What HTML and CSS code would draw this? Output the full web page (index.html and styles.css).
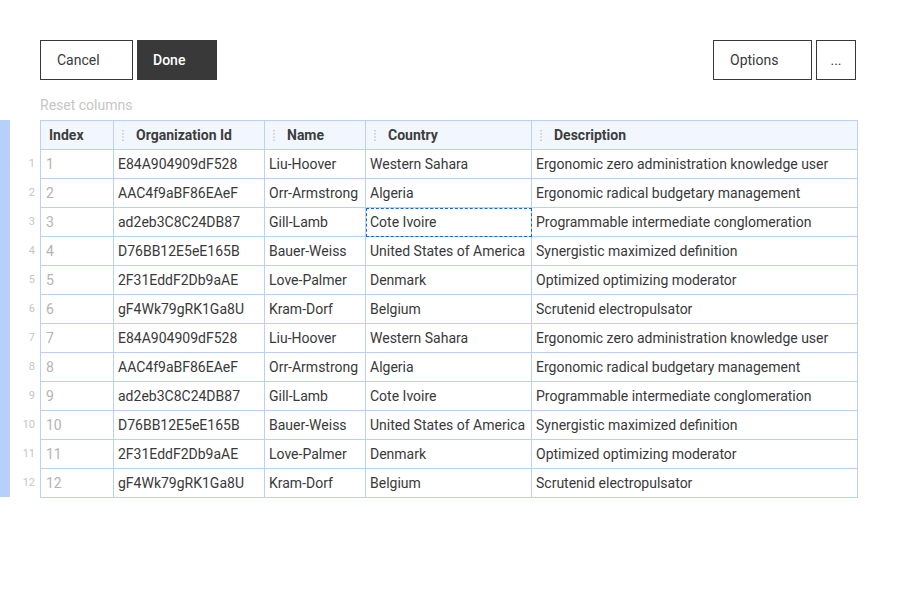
FILE: index.html
```html
<!DOCTYPE html>
<html lang="en">
<head>
<meta charset="utf-8">
<title>Data grid</title>
<link rel="stylesheet" href="styles.css">
</head>
<body>
<div class="page">
  <div class="toolbar">
    <div class="btn-group">
      <button class="btn btn-secondary btn-cancel">Cancel</button>
      <button class="btn btn-primary btn-done">Done</button>
    </div>
    <div class="btn-group">
      <button class="btn btn-secondary btn-options">Options</button>
      <button class="btn btn-secondary btn-more">...</button>
    </div>
  </div>
  <div class="reset">Reset columns</div>
  <div class="grid-area">
    <div class="sel-bar"></div>
    <div class="gutter">
      <div class="gutter-head"></div>
      <div class="gnum">1</div><div class="gnum">2</div><div class="gnum">3</div><div class="gnum">4</div>
      <div class="gnum">5</div><div class="gnum">6</div><div class="gnum">7</div><div class="gnum">8</div>
      <div class="gnum">9</div><div class="gnum">10</div><div class="gnum">11</div><div class="gnum">12</div>
    </div>
    <table class="grid">
      <colgroup>
        <col class="c-index"><col class="c-org"><col class="c-name"><col class="c-country"><col class="c-desc">
      </colgroup>
      <thead>
        <tr>
          <th class="th-index">Index</th>
          <th><span class="th-inner"><svg class="drag" width="2" height="11" viewBox="0 0 2 11"><rect x="0.5" y="0" width="1" height="1.4"/><rect x="0.5" y="3.2" width="1" height="1.4"/><rect x="0.5" y="6.4" width="1" height="1.4"/><rect x="0.5" y="9.6" width="1" height="1.4"/></svg>Organization Id</span></th>
          <th><span class="th-inner"><svg class="drag" width="2" height="11" viewBox="0 0 2 11"><rect x="0.5" y="0" width="1" height="1.4"/><rect x="0.5" y="3.2" width="1" height="1.4"/><rect x="0.5" y="6.4" width="1" height="1.4"/><rect x="0.5" y="9.6" width="1" height="1.4"/></svg>Name</span></th>
          <th><span class="th-inner"><svg class="drag" width="2" height="11" viewBox="0 0 2 11"><rect x="0.5" y="0" width="1" height="1.4"/><rect x="0.5" y="3.2" width="1" height="1.4"/><rect x="0.5" y="6.4" width="1" height="1.4"/><rect x="0.5" y="9.6" width="1" height="1.4"/></svg>Country</span></th>
          <th><span class="th-inner"><svg class="drag" width="2" height="11" viewBox="0 0 2 11"><rect x="0.5" y="0" width="1" height="1.4"/><rect x="0.5" y="3.2" width="1" height="1.4"/><rect x="0.5" y="6.4" width="1" height="1.4"/><rect x="0.5" y="9.6" width="1" height="1.4"/></svg>Description</span></th>
        </tr>
      </thead>
      <tbody>
        <tr><td class="idx">1</td><td>E84A904909dF528</td><td>Liu-Hoover</td><td>Western Sahara</td><td>Ergonomic zero administration knowledge user</td></tr>
        <tr><td class="idx">2</td><td>AAC4f9aBF86EAeF</td><td>Orr-Armstrong</td><td>Algeria</td><td>Ergonomic radical budgetary management</td></tr>
        <tr><td class="idx">3</td><td>ad2eb3C8C24DB87</td><td>Gill-Lamb</td><td class="focused">Cote Ivoire</td><td>Programmable intermediate conglomeration</td></tr>
        <tr><td class="idx">4</td><td>D76BB12E5eE165B</td><td>Bauer-Weiss</td><td>United States of America</td><td>Synergistic maximized definition</td></tr>
        <tr><td class="idx">5</td><td>2F31EddF2Db9aAE</td><td>Love-Palmer</td><td>Denmark</td><td>Optimized optimizing moderator</td></tr>
        <tr><td class="idx">6</td><td>gF4Wk79gRK1Ga8U</td><td>Kram-Dorf</td><td>Belgium</td><td>Scrutenid electropulsator</td></tr>
        <tr><td class="idx">7</td><td>E84A904909dF528</td><td>Liu-Hoover</td><td>Western Sahara</td><td>Ergonomic zero administration knowledge user</td></tr>
        <tr><td class="idx">8</td><td>AAC4f9aBF86EAeF</td><td>Orr-Armstrong</td><td>Algeria</td><td>Ergonomic radical budgetary management</td></tr>
        <tr><td class="idx">9</td><td>ad2eb3C8C24DB87</td><td>Gill-Lamb</td><td>Cote Ivoire</td><td>Programmable intermediate conglomeration</td></tr>
        <tr><td class="idx">10</td><td>D76BB12E5eE165B</td><td>Bauer-Weiss</td><td>United States of America</td><td>Synergistic maximized definition</td></tr>
        <tr><td class="idx">11</td><td>2F31EddF2Db9aAE</td><td>Love-Palmer</td><td>Denmark</td><td>Optimized optimizing moderator</td></tr>
        <tr><td class="idx">12</td><td>gF4Wk79gRK1Ga8U</td><td>Kram-Dorf</td><td>Belgium</td><td>Scrutenid electropulsator</td></tr>
      </tbody>
    </table>
  </div>
</div>
</body>
</html>
```
FILE: styles.css
```css
* { box-sizing: border-box; }
html, body { margin: 0; padding: 0; background: #ffffff; }
body {
  font-family: Roboto, "Liberation Sans", sans-serif;
  font-size: 14px;
  color: #393939;
}
.page { padding-top: 40px; }
.toolbar {
  display: flex;
  justify-content: space-between;
  margin-left: 40px;
  width: 816px;
  height: 40px;
}
.btn-group { display: flex; gap: 4px; }
.btn {
  font-family: inherit;
  font-size: 14px;
  height: 40px;
  margin: 0;
  border: 1px solid #393939;
  background: #ffffff;
  color: #393939;
  text-align: left;
  padding: 0 16px;
  cursor: pointer;
}
.btn-primary { background: #393939; color: #ffffff; font-weight: 500; padding-left: 15px; }
.btn-cancel { width: 93px; }
.btn-done { width: 80px; }
.btn-options { width: 99px; }
.btn-more { width: 40px; text-align: center; padding: 0; }
.reset {
  margin: 16px 0 0 40px;
  height: 24px;
  color: #c6c6c6;
  line-height: 18px;
}
.grid-area { display: flex; align-items: flex-start; }
.sel-bar { width: 10px; height: 377px; background: #b6cffb; }
.gutter { width: 30px; }
.gutter-head { height: 29px; }
.gnum {
  height: 29px;
  line-height: 29px;
  text-align: right;
  padding-right: 5px;
  font-size: 11px;
  color: #c6c6c6;
}
.grid {
  border-collapse: separate;
  border-spacing: 0;
  table-layout: fixed;
  width: 818px;
  border-top: 1px solid #b9d0fa;
  border-left: 1px solid #b9d0fa;
}
.c-index { width: 73px; }
.c-org { width: 151px; }
.c-name { width: 101px; }
.c-country { width: 166px; }
.c-desc { width: 326px; }
.grid th, .grid td {
  height: 29px;
  padding: 0 4px;
  border-right: 1px solid #b9d0fa;
  border-bottom: 1px solid #b9d0fa;
  white-space: nowrap;
  overflow: hidden;
  text-align: left;
  vertical-align: middle;
}
.grid th {
  background: #f2f6fe;
  font-weight: 700;
  color: #3d3d3d;
  padding-left: 8px;
}
.th-inner { display: flex; align-items: center; gap: 12px; }
.drag { fill: #b0b0b0; flex: none; }
.grid td.idx { color: #b4b4b4; padding-left: 5px; }
.grid td.focused { outline: 1px dashed #0f62fe; outline-offset: -1px; }
```
